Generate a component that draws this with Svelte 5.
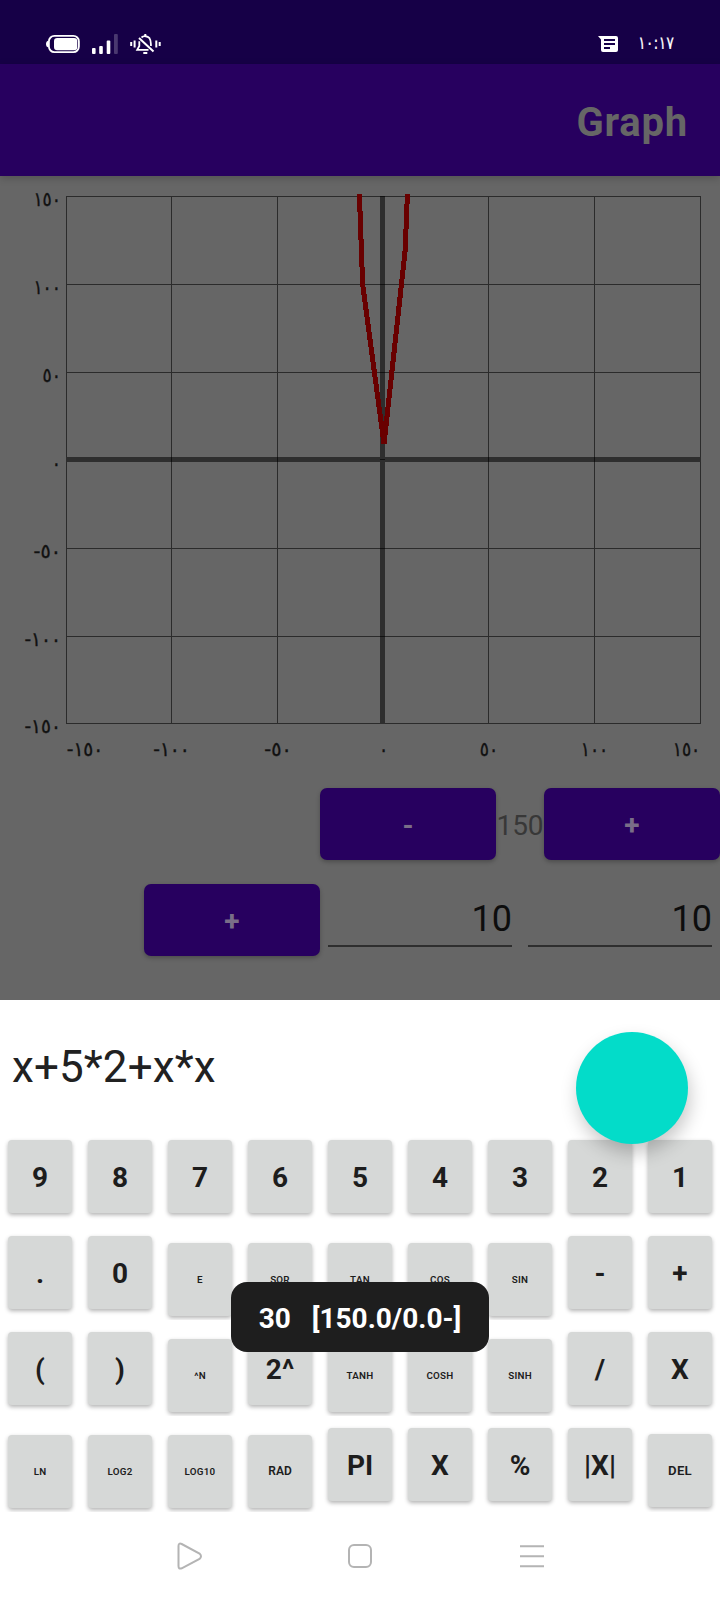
<script>
  const yLines = [196.5, 284.5, 372.5, 548.5, 636.5, 723.5];
  const xLines = [66.5, 171.5, 277.5, 488.5, 594.5, 700.5];
  const yLabels = [
    ['١٥٠', 206], ['١٠٠', 294], ['٥٠', 382], ['٠', 470],
    ['-٥٠', 558], ['-١٠٠', 646], ['-١٥٠', 733],
  ];
  const xLabels = [
    ['-١٥٠', 85], ['-١٠٠', 171.5], ['-٥٠', 278], ['٠', 383.5],
    ['٥٠', 489], ['١٠٠', 594.5], ['١٥٠', 686.5],
  ];
  const labelWidth = (t) => (t.startsWith('-') ? (t.length - 1) * 9.2 + 9 : t.length * 9.2);
  const rows = [
    [['9'], ['8'], ['7'], ['6'], ['5'], ['4'], ['3'], ['2'], ['1']],
    [['.'], ['0'], ['E', 's'], ['SQR', 's'], ['TAN', 's'], ['COS', 's'], ['SIN', 's'], ['-'], ['+']],
    [['('], [')'], ['^N', 's'], ['2^'], ['TANH', 's'], ['COSH', 's'], ['SINH', 's'], ['/'], ['X']],
    [['LN', 's'], ['LOG2', 's'], ['LOG10', 's'], ['RAD', 'm'], ['PI'], ['X'], ['%'], ['|X|'], ['DEL', 'd']],
  ];
</script>

<div class="screen">
  <header class="status">
    <div class="left">
      <svg width="34" height="20" viewBox="0 0 34 20">
        <rect x="2.9" y="1.9" width="30" height="16.2" rx="5.5" fill="none" stroke="#fff" stroke-width="1.8" />
        <path d="M2.5 6.5Q0 7 0 10T2.5 13.5Z" fill="#fff" />
        <rect x="8" y="4" width="23.3" height="12.2" rx="3.2" fill="#fff" />
      </svg>
      <svg width="26" height="20" viewBox="0 0 26 20" fill="#fff">
        <rect x="0" y="14" width="3.6" height="6" rx="1" />
        <rect x="7.2" y="12" width="3.6" height="8" rx="1" />
        <rect x="14.7" y="6.5" width="3.6" height="13.5" rx="1" />
        <rect x="22" y="0" width="3.8" height="20" rx="1" opacity=".22" />
      </svg>
      <svg width="31" height="20" viewBox="0 0 31 20" fill="none" stroke="#fff" stroke-width="1.8">
        <path d="M1.2 8v4M4.6 6.5v7M26.3 6.5v7M29.7 8v4" stroke-width="2" />
        <path d="M9 4l14.5 13.5" stroke-width="2" />
        <path d="M9.3 7.3V12L7.2 15.8H18.5M11.5 3.5C13.5 1.6 17.5 1.8 19.5 4.2 21.2 6.5 20.7 9.5 21 12" />
        <path d="M15.3 0v2M13.3 19h4" stroke-width="2" />
      </svg>
    </div>
    <div class="right">
      <svg width="20" height="16" viewBox="0 0 20 16">
        <path d="M0 0H18Q20 0 20 2V14Q20 16 18 16H5Q3 16 3 14V3.5Z" fill="#fff" />
        <path d="M6 4H17M6 8H17M6 12H12" stroke="#16004a" stroke-width="1.9" />
      </svg>
      <svg class="clock" width="44" height="30" viewBox="0 0 44 30">
        <text class="time" x="4" y="20.5" textLength="36" lengthAdjust="spacingAndGlyphs">١٠:١٧</text>
      </svg>
    </div>
  </header>
  <div class="appbar"><h1>Graph</h1></div>

  <main>
    <svg class="chart" width="720" height="612" viewBox="0 176 720 612">
      <g stroke="#2b2b2b" stroke-width="1" shape-rendering="crispEdges">
        {#each yLines as y}<line x1="66" x2="701" y1={y} y2={y} />{/each}
        {#each xLines as x}<line y1="196" y2="724" x1={x} x2={x} />{/each}
        <path d="M66 459.5H701M382.5 196V724" stroke="#2e2e2e" stroke-width="5" />
        <path d="M380 196.5h5M380 284.5h5M380 372.5h5M380 548.5h5M380 636.5h5M171.5 457v5M277.5 457v5M488.5 457v5M594.5 457v5M380 459.5h5" stroke="#111" />
      </g>
      <path d="M359.4 194L362.6 284L384 444L405.2 250L407.4 194" fill="none" stroke="#690000" stroke-width="5" stroke-linejoin="bevel" shape-rendering="crispEdges" />
      <g class="labels">
        {#each yLabels as [t, y]}
          <text x="61" {y} text-anchor="end" textLength={labelWidth(t)} lengthAdjust="spacingAndGlyphs">{t}</text>
        {/each}
        {#each xLabels as [t, x]}
          <text {x} y="756" text-anchor="middle" textLength={labelWidth(t)} lengthAdjust="spacingAndGlyphs">{t}</text>
        {/each}
      </g>
    </svg>
    <div class="controls">
      <button class="purple">-</button><span class="range">150</span><button class="purple">+</button>
    </div>
    <div class="controls">
      <button class="purple">+</button>
      <div class="field">10</div>
      <div class="field">10</div>
    </div>
  </main>

  <section class="sheet">
    <div class="expr">x+5*2+x*x</div>
    {#each rows as row}
      <div class="row">
        {#each row as [label, kind]}<button class="key {kind ?? 'l'}">{label}</button>{/each}
      </div>
    {/each}
    <div class="fab"></div>
    <div class="toast">30&nbsp;&nbsp; [150.0/0.0-]</div>
  </section>

  <nav>
    <svg width="720" height="88" viewBox="0 1512 720 88" fill="none" stroke="#b4b4b4" stroke-width="2">
      <path d="M178.5 1546Q178.5 1542.5 181.7 1544L199.5 1553.6Q202.5 1556.3 199.5 1559L181.7 1568.3Q178.5 1569.5 178.5 1566Z" />
      <rect x="349" y="1545" width="22" height="22" rx="5" />
      <path d="M520 1546.3h24M520 1556.3h24M520 1566.3h24" />
    </svg>
  </nav>
</div>

<style>
  :global(body) { margin: 0; background: #fff; }
  .screen { width: 720px; height: 1600px; display: flex; flex-direction: column; font-family: Roboto, sans-serif; overflow: hidden; background: #fff; }
  .status { height: 64px; box-sizing: border-box; padding: 34px 42px 0 46px; background: #160047; display: flex; justify-content: space-between; }
  .left { display: flex; gap: 12px; }
  .right { display: flex; gap: 16px; padding-top: 2px; }
  .clock { margin-top: -8px; }
  .time { font: 18px "DejaVu Sans", sans-serif; fill: #fff; stroke: #fff; stroke-width: .2px; }
  svg { display: block; flex: none; }
  .appbar { height: 112px; background: #27005f; display: flex; align-items: center; justify-content: flex-end; padding-right: 32px; box-shadow: 0 2px 8px rgba(0, 0, 0, .2); position: relative; }
  h1 { margin: 4px 0 0; font-size: 40px; font-weight: 700; color: #666; letter-spacing: .8px; }
  main { height: 824px; background: #666; }
  .labels { font: 20px "DejaVu Sans", sans-serif; fill: #111; stroke: #111; stroke-width: .35px; }
  .controls { display: flex; justify-content: flex-end; height: 72px; margin-bottom: 24px; align-items: center; }
  .purple { width: 176px; height: 72px; border: 0; padding: 2px 0 0; border-radius: 7px; background: #27005f; color: #7a6e88; font: 700 28px Roboto, sans-serif; box-shadow: 0 2px 4px rgba(0, 0, 0, .25); }
  .range { width: 48px; text-align: center; font-size: 28px; color: #383838; padding-top: 2px; }
  .field { box-sizing: border-box; width: 184px; height: 63px; margin: 0 8px; border-bottom: 2px solid #2e2e2e; text-align: right; font-size: 36px; line-height: 70px; color: #0d0d0d; align-self: flex-start; }
  .sheet { position: relative; height: 512px; background: #fff; }
  .expr { height: 128px; box-sizing: border-box; padding-left: 12px; font-size: 44px; line-height: 134px; color: #212121; letter-spacing: .1px; }
  .row { display: grid; grid-template-columns: repeat(9, 80px); height: 96px; overflow: hidden; }
  .key { margin: 12px 8px 0; width: 64px; height: 72.5px; border: 0; padding: 2px 0 0; border-radius: 4px; background: #d6d8d7; color: #1d1d1d; font: 700 28px Roboto, sans-serif; box-shadow: 0 2px 4px rgba(0, 0, 0, .3); }
  .s { margin-top: 19px; padding-top: 0; font-size: 9.8px; font-weight: 600; letter-spacing: .25px; }
  .m { margin-top: 19px; padding-top: 0; font-size: 12px; font-weight: 600; }
  .d { margin-top: 18px; padding-top: 0; font-size: 13.2px; font-weight: 600; letter-spacing: .2px; }
  .fab { position: absolute; left: 576px; top: 32px; width: 112px; height: 112px; border-radius: 50%; background: #03dcc9; box-shadow: 2px 9px 18px rgba(0, 0, 0, .22); }
  .toast { position: absolute; left: 231px; top: 282px; width: 258px; height: 70px; border-radius: 16px; background: #1e1e1e; color: #fff; font-size: 28px; font-weight: 700; line-height: 73px; text-align: center; white-space: pre; }
  nav { height: 88px; }
</style>
